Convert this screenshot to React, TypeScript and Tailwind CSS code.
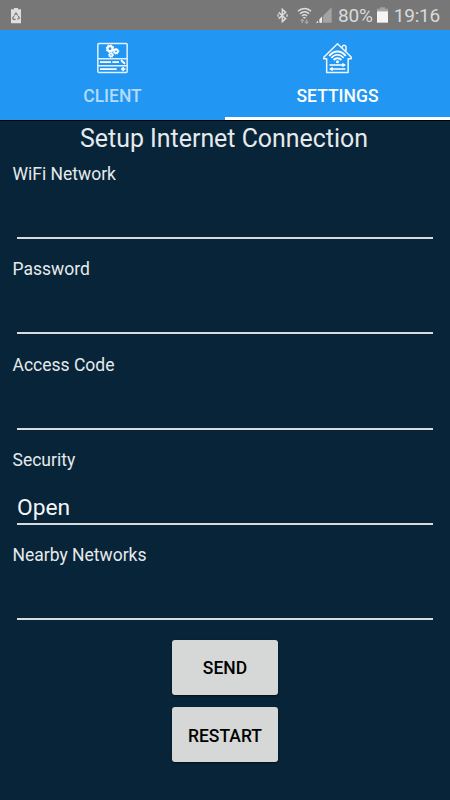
import type { ReactNode } from "react";

const fields = [
  { label: "WiFi Network", value: "" },
  { label: "Password", value: "" },
  { label: "Access Code", value: "" },
  { label: "Security", value: "Open" },
  { label: "Nearby Networks", value: "" },
];

function RecycleBatteryIcon() {
  return (
    <svg className="ml-[11px] h-[17px] w-[10px]" viewBox="0 0 30 51">
      <path d="M9 3h12v4h9v42H0V7h9z" fill="#dedede" />
      <g fill="none" stroke="#777" strokeWidth="3.6">
        <path d="M10 25l5-7 5 7M22 27l3 7-6 3M14 37H7l-2-4 4-6" />
      </g>
    </svg>
  );
}

function BluetoothIcon() {
  return (
    <svg className="h-[15px] w-[11px]" viewBox="0 0 33 45" fill="none" stroke="#dadada" strokeWidth="4.5">
      <path d="M5 13l21 19-10 9V4l10 9L5 32" />
      <path d="M3 19v7M30 19v7" strokeWidth="4" />
    </svg>
  );
}

function WifiIcon() {
  return (
    <svg className="ml-[9px] h-[17px] w-[15px]" viewBox="0 0 45 51" fill="none">
      <g stroke="#dedede" strokeWidth="4.5">
        <path d="M3 13c11-11 29-11 39 0" />
        <path d="M9 20c8-8 20-8 27 0" />
        <path d="M15 27c5-5 11-5 15 0" />
      </g>
      <path d="M17 30h11l-5.5 5z" fill="#dedede" />
      <path d="M16 49V37m-5 5l5-5 5 5M29 37v12m-5-5l5 5 5-5" stroke="#a3a3a3" strokeWidth="4" />
    </svg>
  );
}

function SignalIcon() {
  return (
    <svg className="ml-[4px] h-[16px] w-[16px]" viewBox="0 0 48 48">
      <path d="M0 47L47 1v46z" fill="#a3a3a3" />
      <path d="M0 47l6-6v6zM10 47V37l9-9v19z" fill="#ededed" />
      <path d="M8 34v14M20 22v26" stroke="#777" strokeWidth="3" />
    </svg>
  );
}

function BatteryIcon() {
  return (
    <svg className="ml-[4px] h-[16px] w-[11px]" viewBox="0 0 33 48">
      <path d="M9 1h15v4h9v9H0V5h9z" fill="#a3a3a3" />
      <path d="M0 13h33v34H0z" fill="#f5f5f5" />
    </svg>
  );
}

function ClientIcon() {
  return (
    <svg className="h-[45px] w-[55px]" viewBox="0 0 165 135" fill="none" stroke="#e0f0fe" strokeWidth="4.5">
      <rect x="38.500" y="22.500" width="88" height="87" rx="3" />
      <path d="M38 68h89M38 89h89" />
      <path d="M45 78.500h33M82 78.500h20M45 99.500h50M108 99.500h13M114.500 93v13" stroke="#fff" strokeWidth="5" />
      <path d="M108 73l12 10" stroke="#fff" strokeWidth="6" />
      <g stroke="#fff">
        <circle cx="75" cy="38" r="7.500" strokeWidth="6.5" />
        <circle cx="75" cy="38" r="11" strokeWidth="3.5" strokeDasharray="4.600 4" />
        <circle cx="93" cy="46" r="5.500" strokeWidth="5.5" />
        <circle cx="93" cy="46" r="8.500" strokeWidth="3" strokeDasharray="3.500 3.200" />
        <circle cx="78" cy="57" r="4.500" strokeWidth="5" />
        <circle cx="78" cy="57" r="7.500" strokeWidth="3" strokeDasharray="3 2.900" />
      </g>
    </svg>
  );
}

function HomeIcon() {
  return (
    <svg className="h-[45px] w-[55px]" viewBox="0 0 165 135" fill="none" stroke="#f0f8ff" strokeWidth="4.5">
      <path d="M50 68h-9l1-5 40.500-39.500 41 39.500v5h-9v41.500H50z" strokeLinejoin="round" />
      <path d="M97 35v-3q1-4 5-4t6 4v14" />
      <g stroke="#fff" strokeWidth="6">
        <path d="M58 60c13-18 36-18 49 0" />
        <path d="M64 66c10-13 27-13 37 0" strokeWidth="4.5" />
        <path d="M71 72c6-7 17-7 23 0" />
      </g>
      <circle cx="82.500" cy="77" r="4.500" fill="#fff" stroke="none" />
      <path d="M58 87h42M64 99h42" stroke="#fff" strokeWidth="5" />
      <path d="M97 80l11 7-11 7zM68 92l-11 7 11 7z" fill="#fff" stroke="none" />
    </svg>
  );
}

function Tab({ icon, label, active }: { icon: ReactNode; label: string; active?: boolean }) {
  return (
    <button
      className={`flex h-[90px] w-1/2 flex-col items-center border-b-[3px] pt-[6px] ${
        active ? "border-white text-white" : "border-transparent text-[#b4dbfb]"
      }`}
    >
      {icon}
      <span className="mt-[3px] text-[17.5px] leading-6 font-medium">{label}</span>
    </button>
  );
}

function Field({ label, value }: { label: string; value: string }) {
  return (
    <div className="h-[95.3px]">
      <div className="pl-[12.5px] text-[17.5px] leading-6 text-[#e6eaec]">{label}</div>
      <div className="mx-[17px] flex h-[53px] items-end border-b-2 border-[#d8dbdd] pb-px text-[22.8px] leading-7 text-[#f4f6f7]">
        {value}
      </div>
    </div>
  );
}

function ActionButton({ label }: { label: string }) {
  return (
    <button className="h-[55px] w-[106px] rounded-[3px] bg-[#d6d8d7] pt-[2px] text-[17.5px] font-medium text-black shadow-[0_1px_2px_rgba(0,0,0,0.6)]">
      {label}
    </button>
  );
}

export default function App() {
  return (
    <div className="h-[800px] w-[450px] overflow-hidden bg-[#082438] font-['Roboto',sans-serif]">
      <header className="flex h-[30px] items-center justify-between bg-[#777] text-[#dadada]">
        <RecycleBatteryIcon />
        <div className="flex items-center pr-[10px]">
          <BluetoothIcon />
          <WifiIcon />
          <SignalIcon />
          <span className="ml-[6px] pt-[2px] text-[19px] leading-7 tracking-[-0.2px]">80%</span>
          <BatteryIcon />
          <span className="ml-[6px] pt-[2px] text-[19px] leading-7 tracking-[-0.2px]">19:16</span>
        </div>
      </header>
      <nav className="flex bg-[#2196f3]">
        <Tab icon={<ClientIcon />} label="CLIENT" />
        <Tab icon={<HomeIcon />} label="SETTINGS" active />
      </nav>
      <main className="border-t border-black">
        <h1 className="h-[41px] pr-[2px] text-center text-[24.9px] leading-[35px] text-[#e6eaec]">
          Setup Internet Connection
        </h1>
        {fields.map((f) => (
          <Field key={f.label} label={f.label} value={f.value} />
        ))}
        <div className="flex flex-col items-center gap-[12.5px] pt-[1.5px]">
          <ActionButton label="SEND" />
          <ActionButton label="RESTART" />
        </div>
      </main>
    </div>
  );
}
